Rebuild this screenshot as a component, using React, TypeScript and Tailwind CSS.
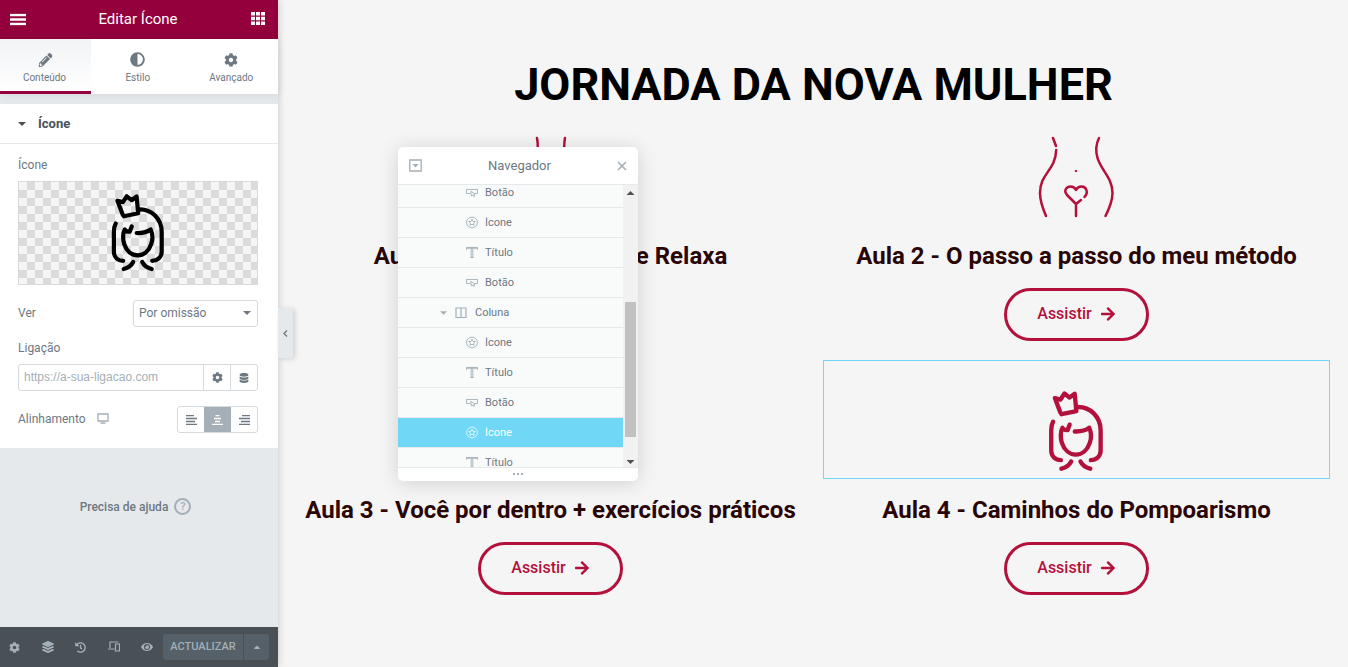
import React from "react";
import { FaArrowRight, FaCog, FaDatabase, FaLayerGroup, FaHistory, FaEye, FaPencilAlt, FaAdjust, FaCaretUp } from "react-icons/fa";

const Woman = ({ className }: { className: string }) => (
  <svg className={className} viewBox="0 0 60 84" fill="none" stroke="currentColor" strokeWidth="4.2" strokeLinecap="round" strokeLinejoin="round">
    <path d="M10 22.5 4.7 8.7l5.5 1.4 3.8-5.8 4.9 3.9 5-3.7 1.6 16.8-14.3 3z" />
    <path d="M25.5 17.4C39 16.5 49 27 49 40V59.500C49 65.500 44.500 68.800 39.500 68.800" />
    <path d="M3 31.500C1.300 34.500 1.200 37 1.200 40V59.500C1.200 65.500 5.500 68.800 10.500 68.800" />
    <path d="M19 34.400 17 39.700C14.500 40 13 39 12 37.500 9.800 41 10.200 48 11.500 52 13.800 59 19 63.400 25 63.400S36.200 59 38.500 52C40 48 40 42 38 37.500 34 40.500 29.500 41.200 24 41" />
    <path d="M20.500 70C18.500 74 15 76 11 77M29.500 70C31.500 74 35 76 39 77" />
  </svg>
);

const Body = () => (
  <svg className="h-[84px] w-[80px] -translate-x-px text-[#b3103c]" viewBox="0 0 80 84" fill="none" stroke="currentColor" strokeWidth="2.5" strokeLinecap="round" strokeLinejoin="round">
    <path d="M17 3 20 11M20.200 15C19.500 36 4 38 4 58 4 67 7 74 10 81" />
    <path d="M63 3C60 9 59.500 16 61.500 23 65 35 76.500 43 76.500 58 76.500 67 73 74 69.500 81" />
    <path d="M40 81V69L31 60C27 55 31 51.500 34.500 51.500 37 51.500 39 53 40 55 41 53 43 51.500 45.500 51.500 50 51.500 53 57 48.500 62M45 65 40 69" />
    <path d="M39.500 35.500h1v1h-1z" strokeWidth="1.200" strokeLinecap="butt" />
  </svg>
);

const Figure = () => (
  <svg className="h-[84px] w-[80px] text-[#b3103c]" viewBox="0 0 80 84" fill="none" stroke="currentColor" strokeWidth="2.500" strokeLinecap="round">
    <path d="M26 3c.6 3 .8 5 .8 10-1 14-8 34-4 66M54 3c-.6 3-.8 5-.8 10 1 14 8 34 4 66" />
  </svg>
);

type Kind = "button" | "icon" | "title" | "column";

const NavIcon = ({ kind }: { kind: Kind }) => (
  <svg className="h-[13px] w-[12px] shrink-0" viewBox="0 0 12 13" fill="none" stroke="currentColor" strokeWidth=".9">
    {kind === "button" && <><path d="M4.500 7.500H.5v-4h11v4H9" /><path d="m4.800 5.300.5 4.700 1.400-1 1 1.500 1-.6-1-1.400 1.500-.5z" /></>}
    {kind === "icon" && <><circle cx="6" cy="6.500" r="5.400" /><path d="m6 3.200 1 2.200 2.300.2-1.700 1.500.5 2.300L6 8.200 3.900 9.400l.5-2.300-1.700-1.500L5 5.400z" /></>}
    {kind === "title" && <><path d="M.5 3.700V1.500h11v2.200M.5 2.300h11" /><path d="M5.200 2.500v8.800h1.600V2.500M4.200 11.400h3.600" /></>}
    {kind === "column" && <path d="M1 2h10v9.500H1zM6 2v9.500M.5 2h11" strokeWidth="1.200" />}
  </svg>
);

const rows: [Kind, string][] = [
  ["button", "Botão"], ["icon", "Ícone"], ["title", "Título"], ["button", "Botão"], ["column", "Coluna"],
  ["icon", "Ícone"], ["title", "Título"], ["button", "Botão"], ["icon", "Ícone"], ["title", "Título"],
];

const Tab = ({ label, active, children }: { label: string; active?: boolean; children: React.ReactNode }) => (
  <div className={active ? "flex h-[55px] w-[91px] flex-col items-center border-b-[3px] border-[#93003c] bg-gradient-to-b from-[#f1f3f5] to-white pt-[13px] pr-[2px]" : "flex h-[55px] flex-1 flex-col items-center pt-[13px]"}>
    <div className="flex h-[15px] items-center text-[15px]">{children}</div>
    <span className="mt-[5px] text-[10px] leading-[12px]">{label}</span>
  </div>
);

const AlignIcon = ({ mode }: { mode: "left" | "center" | "right" }) => {
  const d = { left: "M0 .5h8M0 3.500h11M0 6.500h9M0 9.500h11", center: "M3.500 .5h4M2 3.500h7M3 6.500h5M0 9.500h11", right: "M3 .5h8M0 3.500h11M2 6.500h9M0 9.500h11" }[mode];
  return <svg className="h-[10px] w-[11px]" viewBox="0 0 11 10" fill="none" stroke="currentColor" strokeWidth="1.300"><path d={d} /></svg>;
};

const Sidebar = () => (
  <aside className="relative z-10 flex h-full w-[278px] shrink-0 flex-col bg-[#e6e9ec] text-[#6d7882] shadow-[0_0_8px_rgba(0,0,0,0.2)]">
    <header className="flex h-[39px] shrink-0 items-center justify-between bg-[#93003c] pr-[13px] pl-[10px] text-white">
      <svg className="h-[12px] w-[16px] -translate-y-[0.5px]" viewBox="0 0 16 12" stroke="currentColor" strokeWidth="2.400"><path d="M0 1.500h16M0 6h16M0 10.500h16" /></svg>
      <span className="-translate-x-[0.5px] text-[15px]">Editar Ícone</span>
      <svg className="h-[13px] w-[14px] -translate-y-px" viewBox="0 0 14 13" fill="currentColor"><path d="M0 0h4v3.500H0zM5 0h4v3.500H5zM10 0h4v3.500h-4zM0 4.800h4v3.500H0zM5 4.800h4v3.500H5zM10 4.800h4v3.500h-4zM0 9.500h4V13H0zM5 9.500h4V13H5zM10 9.500h4V13h-4z" /></svg>
    </header>
    <nav className="flex h-[55px] shrink-0 bg-white shadow-[0_1px_10px_rgba(0,0,0,0.08)]">
      <Tab label="Conteúdo" active><FaPencilAlt className="size-[14px] translate-x-[0.5px]" /></Tab>
      <Tab label="Estilo"><FaAdjust /></Tab>
      <Tab label="Avançado"><FaCog className="size-[14px]" /></Tab>
    </nav>
    <section className="mt-[10px] h-[344px] shrink-0 bg-white">
      <div className="flex h-[40px] items-center border-b border-[#e6e9ec] pl-[18px] text-[13px] font-bold text-[#495157]">
        <svg className="mr-[12px] h-[4px] w-[8px]" viewBox="0 0 8 4" fill="currentColor"><path d="M0 0h8L4 4z" /></svg>Ícone
      </div>
      <div className="pr-[20px] pl-[18px] text-[12px]">
        <div className="h-[37px] pt-[12px] leading-[18px]">Ícone</div>
        <div className="flex h-[104px] justify-center border border-[#d5dadf] bg-[repeating-conic-gradient(#dbdbdb_0_25%,#f5f5f5_0_50%)] bg-[length:16px_16px] pt-[10px]">
          <Woman className="h-[84px] w-[60px] shrink-0 translate-x-[4.7px] overflow-visible text-black" />
        </div>
        <div className="mt-[14.5px] flex h-[27px] items-center justify-between">
          <span>Ver</span>
          <div className="flex h-[27px] w-[125px] items-center justify-between rounded-[3px] border border-[#d5dadf] pr-[6px] pl-[5px]">
            <span>Por omissão</span>
            <svg className="h-[4px] w-[8px]" viewBox="0 0 8 4" fill="currentColor"><path d="M0 0h8L4 4z" /></svg>
          </div>
        </div>
        <div className="mt-[12.5px] leading-[18px]">Ligação</div>
        <div className="mt-[7px] flex h-[27px] rounded-[3px] border border-[#d5dadf]">
          <div className="flex w-[185px] items-center border-r border-[#d5dadf] pb-[2px] pl-[5px] font-['Liberation_Sans',sans-serif] text-[12px] text-[#a4afb7]">https://a-sua-ligacao.com</div>
          <div className="flex w-[27px] items-center justify-center border-r border-[#d5dadf]"><FaCog className="size-[11px]" /></div>
          <div className="flex flex-1 items-center justify-center"><FaDatabase className="size-[10px]" /></div>
        </div>
        <div className="mt-[15px] flex h-[27px] items-center">
          <span className="-translate-y-px">Alinhamento</span>
          <svg className="ml-[11px] h-[11px] w-[12px] -translate-y-px text-[#a4afb7]" viewBox="0 0 12 11" fill="none" stroke="currentColor"><path d="M1 1h10v7H1zM3.500 10h5" strokeWidth="1.300" /></svg>
          <div className="ml-auto flex h-[27px] w-[81px] overflow-hidden rounded-[3px] border border-[#d5dadf]">
            <div className="flex w-[26px] items-center justify-center"><AlignIcon mode="left" /></div>
            <div className="-my-px flex w-[27px] items-center justify-center bg-[#a4afb7] text-white"><AlignIcon mode="center" /></div>
            <div className="flex w-[26px] items-center justify-center"><AlignIcon mode="right" /></div>
          </div>
        </div>
      </div>
    </section>
    <div className="mt-[50px] flex h-[17px] items-center justify-center pr-[7px] text-[12px] font-medium">
      Precisa de ajuda
      <span className="ml-[6px] flex size-[17px] items-center justify-center rounded-full border-2 border-[#a4afb7] text-[11px] leading-none text-[#a4afb7]">?</span>
    </div>
    <footer className="mt-auto flex h-[40px] items-center bg-[#495157] text-[#a4afb7]">
      <div className="flex w-[153px] items-center justify-between pl-[9px]">
        <FaCog className="size-[11px]" />
        <FaLayerGroup className="size-[12px]" />
        <FaHistory className="size-[11px]" />
        <svg className="h-[11px] w-[12px] -translate-y-px" viewBox="0 0 12 11" fill="none" stroke="currentColor" strokeWidth="1.200"><path d="M2 7V1h8.500M0 8h6.500M7.500 3h4v7h-4z" /></svg>
        <FaEye className="size-[12px]" />
      </div>
      <div className="ml-[10px] flex h-[26px] w-[106px] overflow-hidden rounded-[3px] bg-[#556068] text-[11px] font-medium">
        <div className="flex w-[81px] items-center justify-center border-r border-[#495157] pt-px">ACTUALIZAR</div>
        <div className="flex flex-1 items-center justify-center"><FaCaretUp className="size-[10px]" /></div>
      </div>
    </footer>
    <div className="absolute top-[308px] left-[278px] flex h-[50px] w-[15px] items-center justify-center rounded-r-[3px] bg-[#e6e9ec] shadow-[2px_1px_5px_rgba(0,0,0,0.15)]">
      <svg className="h-[7px] w-[5px]" viewBox="0 0 5 7" fill="none" stroke="currentColor" strokeWidth="1.300"><path d="M4 .5 1 3.500l3 3" /></svg>
    </div>
  </aside>
);

const Lesson = ({ title, selected, children }: { title: string; selected?: boolean; children: React.ReactNode }) => (
  <article className="flex h-[254px] flex-col items-center px-[10px]">
    <div className={selected ? "flex h-[119px] w-full justify-center border border-[#71d7f7] pt-[28px]" : "flex h-[119px] w-full justify-center pt-[29px]"}>{children}</div>
    <h2 className="mt-[16px] text-[24px] leading-[30px] font-bold whitespace-nowrap text-[#2a0505]">{title}</h2>
    <button className="mt-[17px] flex h-[53px] w-[145px] items-center justify-center gap-[8px] rounded-full border-3 border-[#b3103c] pb-[2px] text-[16px] font-medium text-[#b3103c]">
      Assistir<FaArrowRight />
    </button>
  </article>
);

const Navigator = () => (
  <div className="absolute top-[147px] left-[398px] z-20 flex h-[334px] w-[240px] flex-col overflow-hidden rounded-[5px] bg-white text-[#6d7882] shadow-[0_2px_20px_rgba(0,0,0,0.15)]">
    <header className="flex h-[38px] shrink-0 items-center justify-between border-b border-[#e6e9ec] pr-[10.5px] pl-[10.5px] text-[13px]">
      <svg className="size-[13px] text-[#a4afb7]" viewBox="0 0 13 13" fill="none" stroke="currentColor"><path d="M.8 1h11.400v11H.8z" strokeWidth="1.300" /><path d="M3.500 5h6l-3 3.500z" fill="currentColor" stroke="none" /></svg>
      <span>Navegador</span>
      <svg className="size-[10px] text-[#a4afb7]" viewBox="0 0 10 10" fill="none" stroke="currentColor" strokeWidth="1.600"><path d="m1 1 8 8M9 1 1 9" /></svg>
    </header>
    <div className="flex h-[282px] overflow-hidden">
      <div className="-mt-[7px] w-[225px] shrink-0">
        {rows.map(([kind, label], i) => (
          <div key={i} className={i === 8 ? "flex h-[30px] items-center border-b border-[#e6e9ec] bg-[#71d7f7] pl-[68px] text-[11px] text-white" : kind === "column" ? "flex h-[30px] items-center border-b border-[#e6e9ec] bg-[#f9fbfb] pl-[42px] text-[11px]" : "flex h-[30px] items-center border-b border-[#e6e9ec] bg-[#f9fbfb] pl-[68px] text-[11px]"}>
            {kind === "column" && <svg className="mr-[8px] h-[4px] w-[7px] text-[#a4afb7]" viewBox="0 0 8 4" fill="currentColor"><path d="M0 0h8L4 4z" /></svg>}
            <span className={i === 8 ? "flex text-white/80" : "flex text-[#a4afb7]"}><NavIcon kind={kind} /></span>
            <span className={kind === "column" ? "ml-[8px] h-[11px] overflow-hidden leading-[11px]" : "ml-[7px] h-[11px] overflow-hidden leading-[11px]"}>{label}</span>
          </div>
        ))}
      </div>
      <div className="flex w-[15px] flex-col items-center bg-[#f1f1f1] text-[#505050]">
        <svg className="mt-[6px] h-[4px] w-[8px] -translate-x-[0.5px]" viewBox="0 0 8 4" fill="currentColor"><path d="M0 4h8L4 0z" /></svg>
        <div className="mt-[107px] h-[135px] w-[11px] bg-[#c1c1c1]" />
        <svg className="mt-auto mb-[3px] h-[4px] w-[8px] -translate-x-[0.5px]" viewBox="0 0 8 4" fill="currentColor"><path d="M0 0h8L4 4z" /></svg>
      </div>
    </div>
    <div className="flex flex-1 items-center justify-center gap-[2px] border-t border-[#e6e9ec] pb-px text-[#a4afb7]">
      <i className="size-[2px] bg-current" /><i className="size-[2px] bg-current" /><i className="size-[2px] bg-current" />
    </div>
  </div>
);

export default function App() {
  return (
    <div className="relative flex h-[667px] w-[1348px] overflow-hidden bg-[#f5f5f5] font-[Roboto,sans-serif]">
      <Sidebar />
      <main className="flex-1 pt-[60px] pr-[8px] pl-[9px]">
        <h1 className="text-center text-[45px] leading-[50px] font-bold text-black">JORNADA DA NOVA MULHER</h1>
        <div className="mt-[-4px] grid grid-cols-[527px_526px]">
          <Lesson title="Aula 1 - Respira, Escuta e Relaxa"><Figure /></Lesson>
          <div className="-ml-px"><Lesson title="Aula 2 - O passo a passo do meu método"><Body /></Lesson></div>
          <Lesson title="Aula 3 - Você por dentro + exercícios práticos"><Figure /></Lesson>
          <div className="-ml-px"><Lesson title="Aula 4 - Caminhos do Pompoarismo" selected><Woman className="h-[87px] w-[62px] shrink-0 translate-x-[4px] overflow-visible text-[#b3103c]" /></Lesson></div>
        </div>
      </main>
      <Navigator />
    </div>
  );
}
